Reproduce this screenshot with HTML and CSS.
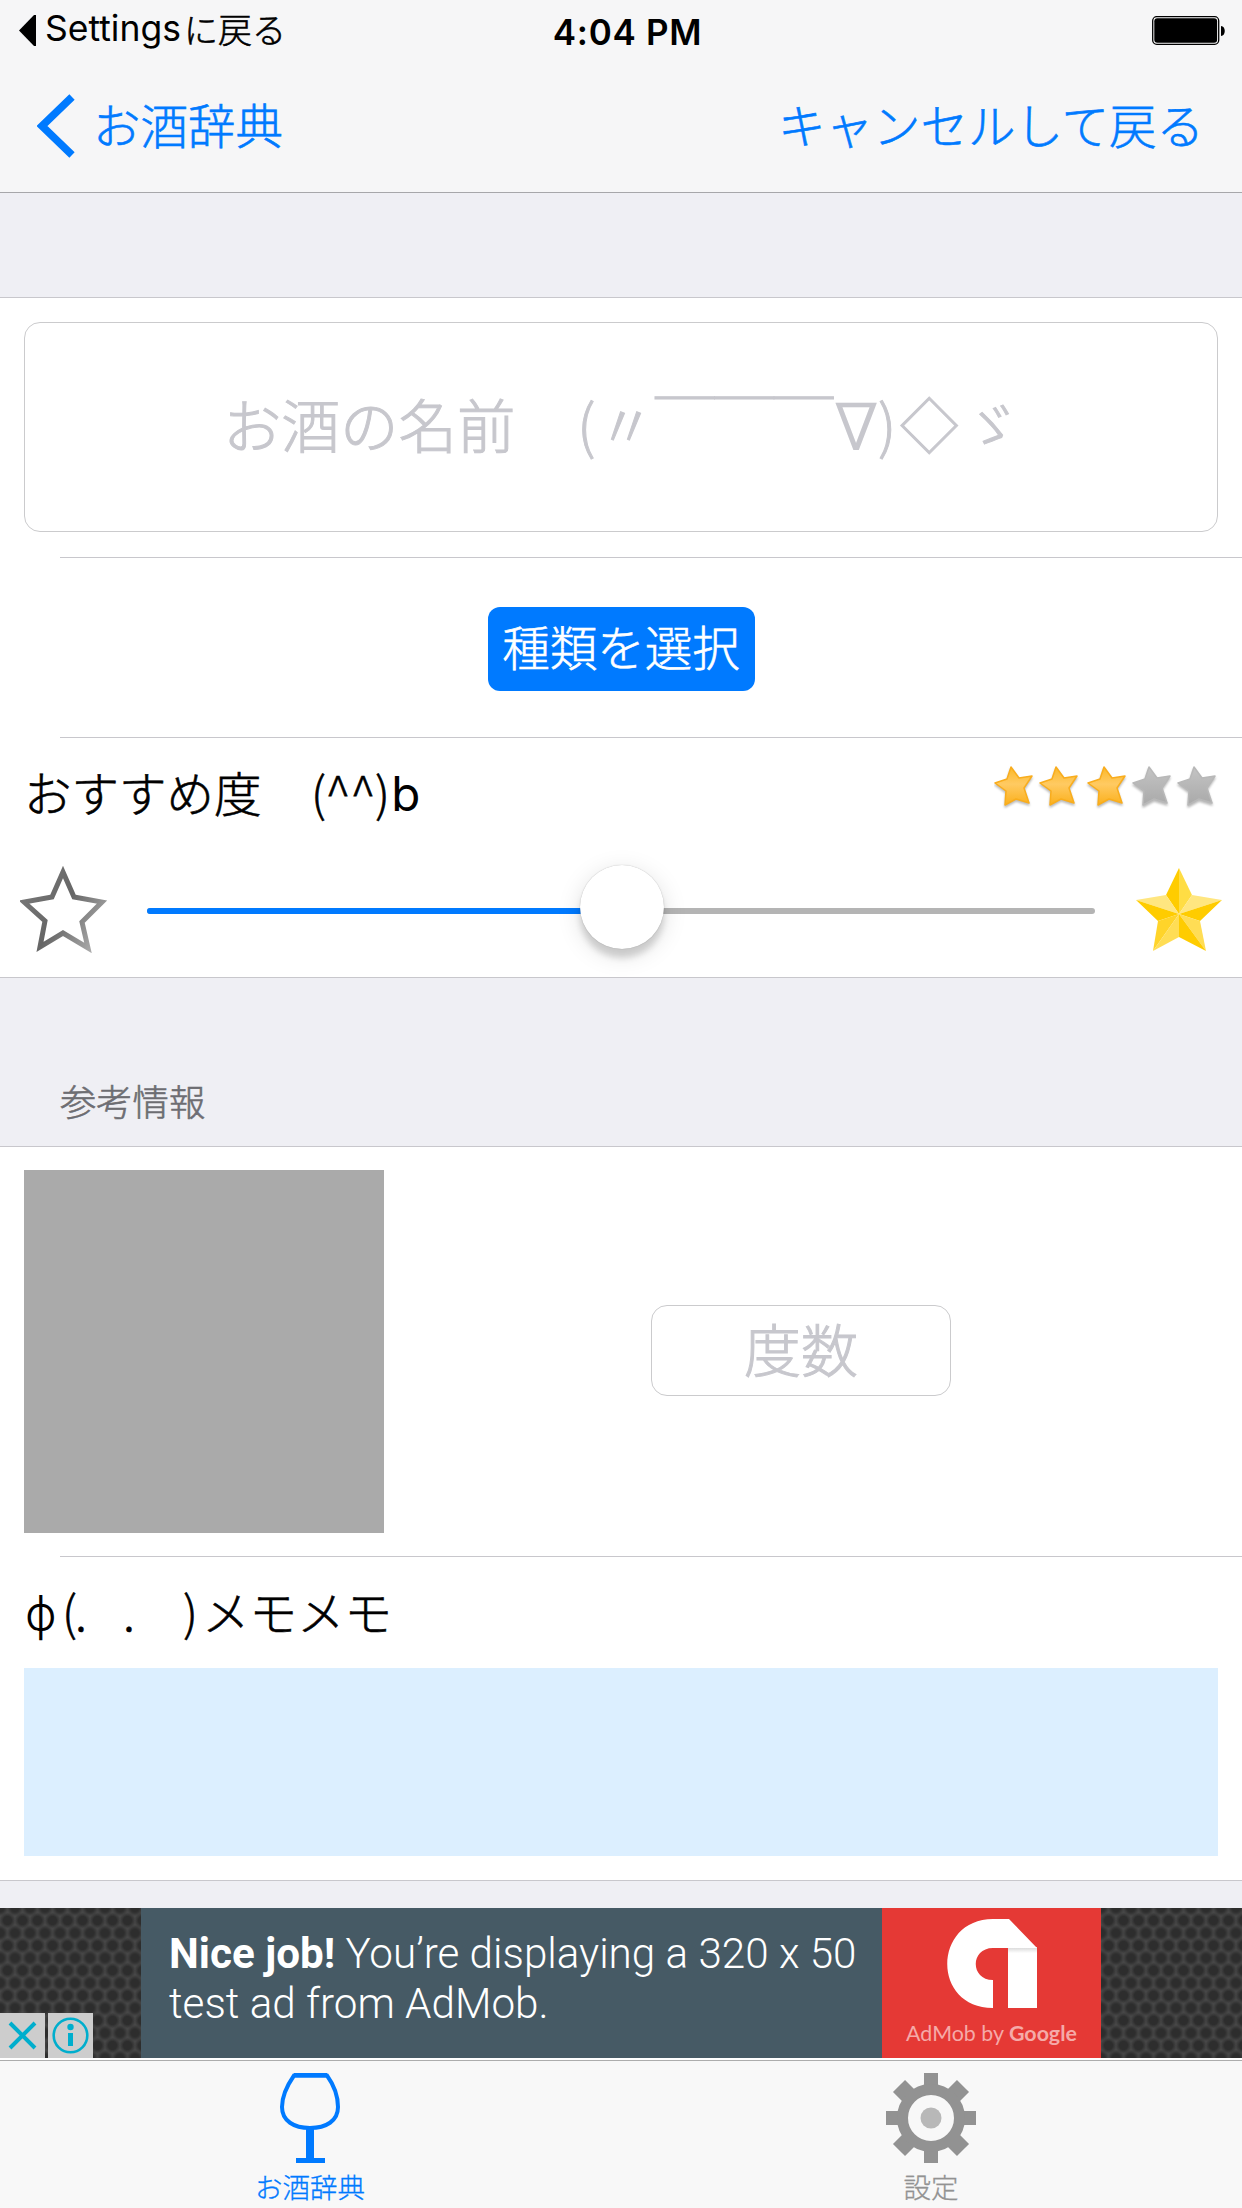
FILE: index.html
```
<!DOCTYPE html>
<html lang="ja">

<head>
    <meta charset="UTF-8">
    <meta name="viewport" content="width=device-width, initial-scale=1.0">
    <title>お酒辞典</title>
    <link rel="stylesheet" href="styles.css">
</head>

<body>
    <header>
        <div class="status-bar">
            <div class="status-back">
                <svg width="17" height="31" viewBox="0 0 17 31"><path d="M17 0v31h-2L0 15.500 15 0z"/></svg>
                <span class="app-name">Settings</span><span>に戻る</span>
            </div>
            <div class="status-time">4:04 PM</div>
            <div class="status-battery">
                <svg width="74" height="30" viewBox="0 0 74 30">
                    <rect x="0.700" y="0.700" width="66" height="27.600" rx="4" fill="none" stroke="#000" stroke-width="1.300"/>
                    <rect x="2.300" y="2.300" width="62.800" height="24.400" rx="3"/>
                    <path d="M69 10c5 0 5 10 0 10z"/>
                </svg>
            </div>
        </div>
        <nav class="nav-bar">
            <a class="nav-back">
                <svg width="40" height="64" viewBox="0 0 40 64"><path d="M35 3L5 32l30 29" fill="none" stroke="#007aff" stroke-width="7.600"/></svg>
                <span>お酒辞典</span>
            </a>
            <a class="nav-cancel">キャンセルして戻る</a>
        </nav>
    </header>

    <main>
        <section class="group">
            <div class="row name-row">
                <div class="name-field">
                    <span class="name-label">お酒の名前</span>
                    <span class="face-open">(</span>
                    <span class="face-cheek">〃</span>
                    <span class="face-brow">￣￣￣</span>
                    <span class="face-mouth">∇</span>
                    <span class="face-close">)</span>
                    <span class="face-cup">◇</span>
                    <span class="face-hand">ゞ</span>
                </div>
            </div>
            <div class="row type-row">
                <button class="type-button">種類を選択</button>
            </div>
            <div class="row rate-row">
                <div class="rate-head">
                    <div class="rate-label"><span class="rate-text">おすすめ度</span><span class="rate-face">(^^)</span><span>b</span></div>
                    <svg class="rating" width="230" height="50" viewBox="0 0 230 50">
                        <defs>
                            <linearGradient id="gold" x1="0" y1="0" x2="0" y2="1">
                                <stop offset="0" stop-color="#fbb829"/>
                                <stop offset="0.450" stop-color="#ffca62"/>
                                <stop offset="1" stop-color="#fbb01c"/>
                            </linearGradient>
                            <linearGradient id="gray" x1="0" y1="0" x2="0" y2="1">
                                <stop offset="0" stop-color="#c4c4c4"/>
                                <stop offset="1" stop-color="#a9a9a9"/>
                            </linearGradient>
                            <path id="star" d="M17 1l8 11 13-2-8 12 5 15-13-4-11 6 1-14L1 17l12-4z" stroke-linejoin="round"/>
                        </defs>
                        <g class="star-shadow" fill="url(#gold)" stroke="#f9ad1d" stroke-width="1.500">
                            <use href="#star" x="0" y="5"/>
                            <use href="#star" x="45" y="5"/>
                            <use href="#star" x="93" y="5"/>
                        </g>
                        <g class="star-shadow" fill="url(#gray)" stroke="#b8b8b8" stroke-width="1.500">
                            <use href="#star" x="138" y="5"/>
                            <use href="#star" x="183" y="5"/>
                        </g>
                    </svg>
                </div>
                <div class="slider">
                    <svg class="star-empty" width="88" height="88" viewBox="0 0 88 88">
                        <defs>
                            <linearGradient id="edge" x1="0" y1="0.200" x2="1" y2="0.800">
                                <stop offset="0" stop-color="#777"/>
                                <stop offset="0.500" stop-color="#666"/>
                                <stop offset="1" stop-color="#aaa"/>
                            </linearGradient>
                        </defs>
                        <path d="M43 7l11 25 28 5-20 20 6 26-25-15-23 14 5-26L4 37l28-5z" fill="none" stroke="url(#edge)" stroke-width="5"/>
                    </svg>
                    <div class="track">
                        <div class="track-fill"></div>
                        <div class="thumb"></div>
                    </div>
                    <svg class="star-full" width="86" height="86" viewBox="0 -2 86 86">
                        <path d="M43 0v46L30 27z" fill="#fc0"/>
                        <path d="M43 0l13 27-13 19z" fill="#fd4"/>
                        <path d="M0 32l30-5 13 19zM86 32l-30-5-13 19z" fill="#ffe680"/>
                        <path d="M0 32l22 21 21-7zM86 32L64 53l-21-7z" fill="#fc0"/>
                        <path d="M22 53l21-7-26 37z" fill="#ffd42a"/>
                        <path d="M64 53l-21-7 27 37z" fill="#ffdd55"/>
                        <path d="M43 46v23L17 83z" fill="#ffdd55"/>
                        <path d="M43 46v23l27 14z" fill="#fc0"/>
                    </svg>
                </div>
            </div>
        </section>

        <h2 class="section-title">参考情報</h2>

        <section class="group">
            <div class="row photo-row">
                <div class="photo"></div>
                <div class="degree-area">
                    <div class="degree-field">度数</div>
                </div>
            </div>
            <div class="row memo-row">
                <div class="memo-label"><span class="memo-phi">ϕ</span><span class="memo-open">(</span><span class="memo-eye">.</span><span class="memo-eye-right">.</span><span class="memo-close">)</span><span>メモメモ</span></div>
                <div class="memo-text"></div>
            </div>
        </section>
    </main>

    <aside class="ad">
        <div class="ad-side">
            <span class="ad-badge">
                <svg width="45" height="45" viewBox="0 0 45 45"><path d="M10 10l25 25M35 10L10 35" stroke="#00aecd" stroke-width="4" fill="none"/></svg>
            </span>
            <span class="ad-badge">
                <svg width="45" height="45" viewBox="0 0 45 45">
                    <circle cx="22.500" cy="22.500" r="16.800" fill="none" stroke="#00aecd" stroke-width="2.600"/>
                    <circle cx="22.500" cy="14" r="3.200" fill="#00aecd"/>
                    <path d="M20 20h5v13h-5z" fill="#00aecd"/>
                </svg>
            </span>
        </div>
        <div class="ad-text">
            <div class="ad-line"><b>Nice job!</b> You’re displaying a 320 x 50</div>
            <div class="ad-line">test ad from AdMob.</div>
        </div>
        <div class="ad-brand">
            <svg width="90" height="90" viewBox="0 0 90 90">
                <defs>
                    <linearGradient id="fold" x1="0" y1="0" x2="0" y2="1">
                        <stop offset="0" stop-color="#d5d5d5"/>
                        <stop offset="0.100" stop-color="#fff"/>
                    </linearGradient>
                </defs>
                <path d="M61 28h29v61H61z" fill="url(#fold)"/>
                <path d="M62 0l28 29H46c-23 0-23 32 0 32v28C-16 89-14 0 46 0z" fill="#fff"/>
            </svg>
            <div class="ad-name">AdMob by <b>Google</b></div>
        </div>
        <div class="ad-side"></div>
    </aside>

    <footer class="tab-bar">
        <a class="tab active">
            <svg width="90" height="90" viewBox="0 0 90 90">
                <path d="M29 2.500h33C71 15 73 25 73 34c0 14-12 21-28 21S17 48 17 34c0-9 4-20 12-31.500z" fill="none" stroke="#007aff" stroke-width="4"/>
                <path d="M29 0h33v4.500H29zM41 55h8v30h11v5H31v-5h10z" fill="#007aff"/>
            </svg>
            <span>お酒辞典</span>
        </a>
        <a class="tab">
            <svg width="90" height="90" viewBox="0 0 90 90">
                <g stroke="#929292" stroke-width="14">
                    <path d="M45 0v18M45 72v18M0 45h18M72 45h18"/>
                    <path d="M13 13l13 13M64 64l13 13M77 13L64 26M26 64L13 77" stroke-width="17"/>
                </g>
                <circle cx="45" cy="45" r="28.500" fill="none" stroke="#929292" stroke-width="11"/>
                <circle cx="45" cy="45" r="10.500" fill="#b8b8b8"/>
            </svg>
            <span>設定</span>
        </a>
    </footer>
</body>

</html>
```
FILE: styles.css
```
* {
    box-sizing: border-box;
}

body {
    margin: 0;
    width: 1242px;
    height: 2208px;
    display: flex;
    flex-direction: column;
    background: #efeff4;
    color: #000;
    font-family: "Noto Sans CJK JP", sans-serif;
    font-weight: 300;
    font-size: 47.5px;
    white-space: nowrap;
    overflow: hidden;
    -webkit-text-stroke: 0.6px;
}

svg {
    display: block;
    flex: none;
}

header {
    height: 193px;
    background: #f6f6f7;
    border-bottom: 1px solid #a7a7aa;
}

.status-bar {
    height: 60px;
    display: grid;
    grid-template-columns: 1fr auto 1fr;
    align-items: center;
    padding: 0 16px 0 19px;
}

.status-back {
    display: flex;
    align-items: center;
    height: 60px;
    padding-bottom: 2px;
    font-size: 34px;
    line-height: 50px;
}

.status-back span {
    padding-bottom: 2px;
}

.app-name {
    margin-left: 9px;
    margin-right: 3px;
    font-family: Inter, sans-serif;
    font-weight: 400;
    font-size: 35.5px;
    -webkit-text-stroke: 0;
}

.status-time {
    margin-left: 10px;
    padding-top: 2px;
    font-family: Inter, sans-serif;
    font-weight: 600;
    font-size: 35px;
    line-height: 60px;
    letter-spacing: 0.7px;
    -webkit-text-stroke: 0;
}

.status-battery {
    display: flex;
    justify-content: flex-end;
}

.nav-bar {
    height: 132px;
    display: flex;
    justify-content: space-between;
    align-items: center;
    padding: 0 38px 0 37px;
    color: #007aff;
    line-height: 70px;
}

.nav-back {
    display: flex;
    align-items: center;
}

.nav-back span {
    padding: 0 0 4px 16px;
}

.nav-cancel {
    padding-bottom: 5px;
}

.group {
    background: #fff;
    border-top: 1px solid #c8c7cc;
    border-bottom: 1px solid #c8c7cc;
}

main > .group:first-child {
    margin-top: 104px;
}

/* separators start after the 60px inset */
.row {
    background: linear-gradient(#c8c7cc, #c8c7cc) 60px 100% / 1182px 1px no-repeat;
}

.row:last-child {
    background: none;
}

.name-row {
    height: 260px;
    padding: 24px;
}

.name-field {
    height: 210px;
    display: flex;
    align-items: center;
    padding: 0 0 8px 198px;
    border: 1px solid #cbcbcd;
    border-radius: 16px;
    color: #c7c7cd;
    font-size: 58.5px;
    line-height: 80px;
    -webkit-text-stroke: 1px;
}

.name-label {
    width: 354px;
}

.face-open {
    width: 20px;
}

.face-cheek {
    width: 58px;
    font-size: 58px;
}

.face-brow {
    width: 180px;
    font-size: 59.5px;
}

.face-mouth {
    width: 43px;
    padding-top: 10px;
    font-family: "DejaVu Sans", sans-serif;
    font-size: 62px;
    -webkit-text-stroke: 2px;
}

.face-close {
    width: 22px;
}

.face-cup {
    width: 62px;
}

.type-row {
    height: 180px;
    padding-top: 49px;
    text-align: center;
}

.type-button {
    width: 267px;
    height: 84px;
    padding: 0 0 6px;
    border: 0;
    border-radius: 12px;
    background: #007aff;
    color: #fff;
    font: inherit;
    line-height: 78px;
}

.rate-row {
    height: 239px;
}

.rate-head {
    height: 126px;
    display: flex;
    justify-content: space-between;
    padding: 23px 18px 0 24px;
}

.rate-label {
    display: flex;
    height: 62px;
    line-height: 62px;
}

.rate-text {
    width: 287px;
}

.rate-face {
    margin-right: 2px;
    letter-spacing: -0.6px;
}

.rate-label span:last-child {
    padding-top: 2px;
    font-family: Inter, sans-serif;
    -webkit-text-stroke: 0;
    font-weight: 400;
}

.star-shadow {
    filter: drop-shadow(0 2px 1px #bbb);
}

.slider {
    height: 90px;
    display: flex;
    align-items: center;
    justify-content: space-between;
    padding: 0 20px 0 20px;
}

.track {
    width: 948px;
    height: 6px;
    margin: 4px 2px 0 0;
    border-radius: 3px;
    background: #b4b4b4;
    position: relative;
}

.track-fill {
    width: 50%;
    height: 6px;
    border-radius: 3px;
    background: #007aff;
}

.thumb {
    position: absolute;
    left: 433px;
    top: -43px;
    width: 84px;
    height: 84px;
    border-radius: 50%;
    background: #fff;
    box-shadow: 0 9px 6px rgba(0, 0, 0, 0.14), 0 6px 24px rgba(0, 0, 0, 0.13), 0 0 1px rgba(0, 0, 0, 0.3);
}

.section-title {
    margin: 0;
    height: 168px;
    padding: 94px 60px 0;
    color: #6d6d72;
    font-size: 36.3px;
    font-weight: 300;
    line-height: 56px;
}

.photo-row {
    height: 410px;
    display: flex;
    padding: 23px 24px 24px;
}

.photo {
    width: 360px;
    height: 363px;
    background: #aaa;
}

.degree-area {
    flex: 1;
    display: flex;
    align-items: center;
    justify-content: center;
}

.degree-field {
    width: 300px;
    height: 91px;
    margin-bottom: 2px;
    border: 1px solid #cbcbcd;
    border-radius: 16px;
    color: #c7c7cd;
    font-size: 57px;
    line-height: 82px;
    text-align: center;
    -webkit-text-stroke: 1px;
}

.memo-row {
    height: 323px;
    padding: 20px 24px 24px;
}

.memo-label {
    display: flex;
    height: 91px;
    line-height: 68px;
}

.memo-phi {
    width: 38px;
    padding: 2px 0 0 1px;
    font-family: Inter, sans-serif;
    font-weight: 300;
    font-size: 48px;
    -webkit-text-stroke: 0;
}

.memo-open {
    width: 13px;
}

.memo-eye {
    width: 48px;
}

.memo-eye-right {
    width: 60px;
}

.memo-close {
    width: 19px;
}

.memo-text {
    height: 188px;
    background: #dcefff;
}

.ad {
    height: 150px;
    margin-top: 27px;
    display: flex;
    font-family: Roboto, sans-serif;
    color: #fff;
    -webkit-text-stroke: 0;
}

.ad-side {
    width: 141px;
    display: flex;
    align-items: flex-end;
    gap: 3px;
    background:
        radial-gradient(circle at 7.5px 12.5px, #2d2d2d 4px, transparent 8px) 0 0 / 15px 25px,
        radial-gradient(circle at 7.5px 12.5px, #2d2d2d 4px, transparent 8px) 7.5px 12.5px / 15px 25px,
        #474747;
}

.ad-badge {
    background: #cdcdcd;
}

.ad-text {
    width: 741px;
    padding: 21px 0 0 28px;
    background: #465a65;
}

.ad-line {
    font-size: 42.2px;
    line-height: 50px;
}

.ad-line b {
    font-weight: 700;
}

.ad-brand {
    width: 219px;
    display: flex;
    flex-direction: column;
    align-items: center;
    padding-top: 11px;
    background: #e53935;
}

.ad-name {
    margin-top: 10px;
    color: #f5aaa8;
    font-family: Lato, sans-serif;
    font-weight: 400;
    font-size: 21.4px;
    line-height: 28px;
}

.tab-bar {
    flex: 1;
    margin-top: 2px;
    display: flex;
    gap: 1px;
    border-top: 1px solid #acacac;
    background: #f8f8f8;
    box-shadow: 0 -2px 0 #fff;
}

.tab {
    width: 620px;
    display: flex;
    flex-direction: column;
    align-items: center;
    padding-top: 12px;
    color: #929292;
    font-size: 27.5px;
    line-height: 40px;
    -webkit-text-stroke: 0.3px;
}

.tab span {
    margin-top: 3px;
}

.tab.active {
    color: #007aff;
}
```
